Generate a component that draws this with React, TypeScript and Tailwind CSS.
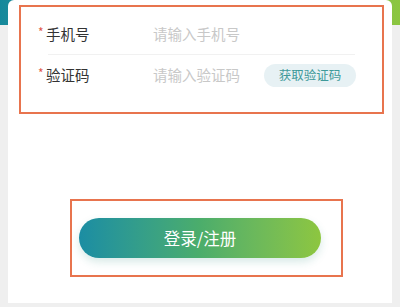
export default function App() {
  return (
    <div
      className="relative w-[400px] h-[307px] overflow-hidden bg-[#efefef]"
      style={{ fontFamily: '"Noto Sans CJK SC", "Noto Sans", sans-serif' }}
    >
      {/* header band behind the card */}
      <div className="absolute left-0 top-0 w-full h-[25px] bg-gradient-to-r from-[#15899c] to-[#8cc63f]" />

      <div className="relative mx-2 h-[303px] bg-white rounded-t-[6px] pt-[5px]">
        <div className="ml-[11px] w-[365px] h-[109px] border-2 border-[#e8744e] pt-[7px]">
          <div className="flex items-center h-[40px] pl-[17px]">
            <span className="w-[8px] text-[12px] text-[#e0584a] leading-none -mt-[4px]">*</span>
            <span className="w-[107px] text-[14.5px] text-[#333333]">手机号</span>
            <span className="text-[14.5px] text-[#c8c8c8]">请输入手机号</span>
          </div>
          <div className="ml-[27px] w-[307px] h-px bg-[#f1f1f1]" />
          <div className="flex items-center h-[40px] pl-[17px]">
            <span className="w-[8px] text-[12px] text-[#e0584a] leading-none -mt-[4px]">*</span>
            <span className="w-[107px] text-[14.5px] text-[#333333]">验证码</span>
            <span className="w-[111px] text-[14.5px] text-[#c8c8c8]">请输入验证码</span>
            <button className="w-[92px] h-[23px] rounded-full bg-[#e7f1f4] text-[12.5px] text-[#3f9a9a] flex items-center justify-center">
              获取验证码
            </button>
          </div>
        </div>

        <div className="ml-[62px] mt-[85px] w-[273px] h-[78px] border-2 border-[#e8744e] pt-[17px] pl-[7px]">
          <button className="w-[242px] h-[40px] rounded-full bg-gradient-to-r from-[#1b8da3] via-[#4bad6b] to-[#8dc63f] text-white text-[16.5px] flex items-center justify-center shadow-[0_4px_8px_rgba(40,140,120,0.18)]">
            登录/注册
          </button>
        </div>
      </div>
    </div>
  );
}
